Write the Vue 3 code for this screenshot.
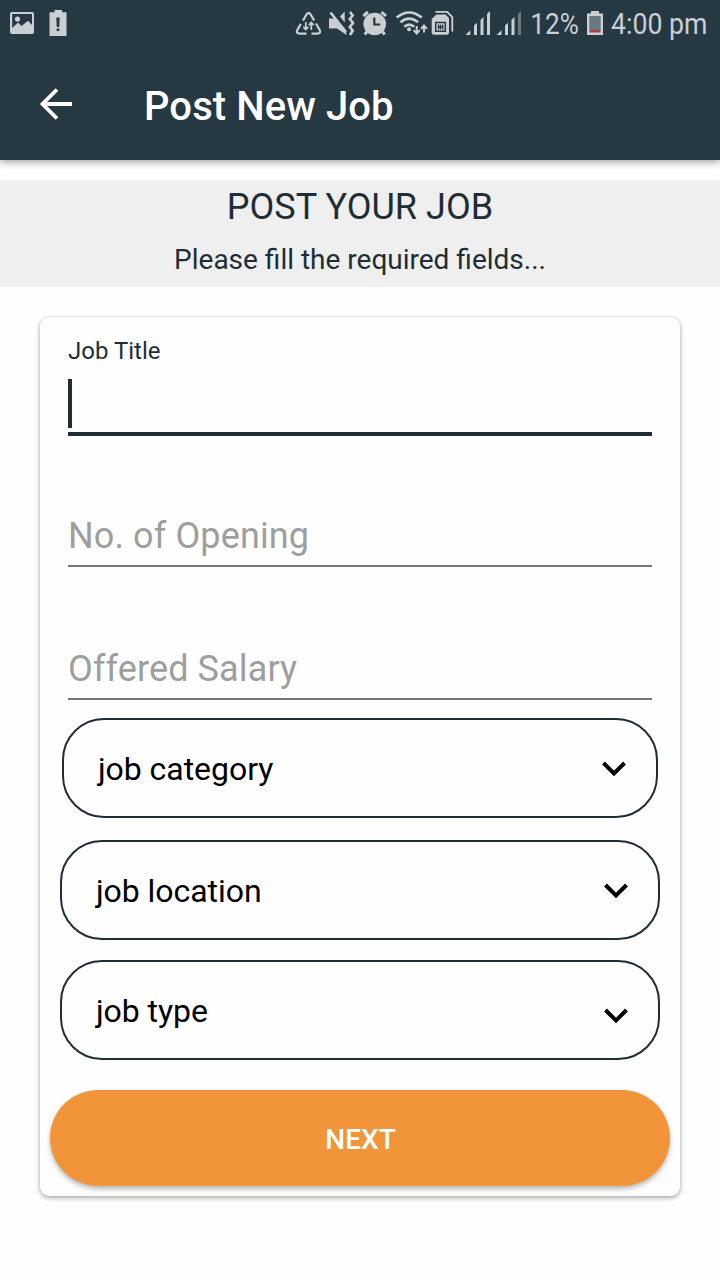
<script setup>
const hints = ['No. of Opening', 'Offered Salary']
const selects = [
  { label: 'job category', cls: 'category' },
  { label: 'job location', cls: 'location' },
  { label: 'job type', cls: 'type' },
]
</script>

<template>
  <div class="screen">
    <header class="top">
      <div class="status">
        <svg class="left-icons" viewBox="0 0 80 48" width="80" height="48">
          <path fill="#c9cfd2" fill-rule="evenodd" d="M12 12H32a2 2 0 0 1 2 2V32a2 2 0 0 1-2 2H12a2 2 0 0 1-2-2V14a2 2 0 0 1 2-2ZM12.2 14V28L18 22.5L21.500 26L28 20.800L32 25V14ZM17.500 16.500a2.600 2.600 0 1 1 0 5.200a2.600 2.600 0 0 1 0-5.200Z" />
          <path fill="#c9cfd2" fill-rule="evenodd" d="M54.500 10H62V12.300H66.500V36H49.500V12.300H54.500ZM56.300 17.500H59.700L59.300 27H56.700ZM56.600 28.600H59.400V31H56.600Z" />
        </svg>
        <svg class="right-icons" viewBox="292 0 428 48" width="428" height="48">
          <g fill="none" stroke="#c9cfd2" stroke-width="2.200">
            <path d="M303 20.500L306.700 14.200Q308.500 11.600 310.400 14.200L314.200 20.500M316 23.500L319.800 30.300Q321 33.500 317.500 33.600H311.500M306.500 33.600H299.500Q296 33.500 297.200 30.300L300.800 24" />
            <path stroke-width="1.700" d="M305.800 22V29.300M303.300 26.800L305.800 29.500L308.300 26.800M311.300 30V22.700M308.800 25.200L311.300 22.500L313.800 25.200" />
            <path stroke-width="2.600" d="M330.500 12.500L346 32" />
            <path stroke-width="2.600" d="M350 12L352.700 15.500L349.800 19L353 23L349.800 27L352.700 30.500L350 35" />
          </g>
          <path fill="#c9cfd2" d="M329 18.500H334.500L346.500 33V35L337 28.500H329ZM340 16.500L344.700 11.500V22.500Z" />
          <circle cx="374.700" cy="24" r="11.300" fill="#c9cfd2" />
          <path fill="none" stroke="#c9cfd2" stroke-width="3" d="M363.400 16L368 12M381.500 12L386 16M367.500 31L364.800 34.500M382 31L384.700 34.500" />
          <path fill="none" stroke="#263842" stroke-width="2.200" d="M374.300 17.500V24.500H380.300" />
          <g fill="none" stroke="#c9cfd2" stroke-width="2.600">
            <path d="M396.700 17.500Q409.200 7.500 421.700 17.500M400.500 22.200Q409.200 15 418 22.200M404.300 26.800Q409.200 22.500 414.200 26.800" />
            <path stroke-width="2" d="M416.700 26V33M413.700 30.200L416.700 33.500L419.700 30.200M424 32.500V26M421 28.800L424 25.500L427 28.800" />
          </g>
          <circle cx="409" cy="29.300" r="2" fill="#c9cfd2" />
          <path fill="#c9cfd2" d="M436.500 14.500H445.500L449 18V32.500Q449 34.800 446.700 34.800H434Q431.700 34.800 431.700 32.500V19Z" />
          <path fill="none" stroke="#c9cfd2" stroke-width="1.800" d="M435.500 11.800H447.200L452.300 17V31.500" />
          <path fill="none" stroke="#263842" stroke-width="1.500" d="M435.700 22.500H445.300V31.300H435.700Z" />
          <path fill="none" stroke="#263842" stroke-width="1.300" d="M438.500 24.500V29.500M440.500 24.500V29.500M442.700 24.500V29.500M438.500 27H442.700" />
          <path fill="#c9cfd2" d="M465.500 35L470.300 30.300V35ZM474 35V25.500L477 22.800V35ZM480.500 35V20L483.500 17V35ZM487 35V14L490 11V35Z" />
          <path fill="#c9cfd2" d="M496.500 35L501.500 30.300V35ZM505 35V25.500L508 22.800V35ZM511.500 35V20L514.500 17V35Z" />
          <path fill="#6b787f" d="M518 35V14L521 11V35Z" />
          <text x="530.300" y="34" textLength="48.500" lengthAdjust="spacingAndGlyphs">12%</text>
          <path fill="#c9cfd2" d="M591 11H599V13.500H603V35H587V13.500H591Z" />
          <path fill="#6b787f" d="M589.300 16H600.700V31H589.300Z" />
          <path fill="#b3383e" d="M589.700 30.300H600.300V32.500H589.700Z" />
          <text x="611" y="34" textLength="96.500" lengthAdjust="spacingAndGlyphs">4:00 pm</text>
        </svg>
      </div>
      <div class="bar">
        <svg class="back" viewBox="0 0 34 34" width="34" height="34">
          <path d="M33 17H4.500M18 2.500L3.500 17L18 31.500" fill="none" stroke="#fff" stroke-width="3.800" />
        </svg>
        <h1>Post New Job</h1>
      </div>
    </header>

    <section class="banner">
      <h2>POST YOUR JOB</h2>
      <p>Please fill the required fields...</p>
    </section>

    <main class="card">
      <div class="field active">
        <label>Job Title</label>
        <div class="entry"><i class="caret"></i></div>
      </div>
      <div v-for="h in hints" :key="h" class="field hint"><span>{{ h }}</span></div>
      <div v-for="s in selects" :key="s.label" class="select" :class="s.cls">
        <span>{{ s.label }}</span>
        <svg viewBox="0 0 24 16" width="24" height="16">
          <path d="M1.500 2L12 12.500L22.500 2" fill="none" stroke="#000" stroke-width="4" />
        </svg>
      </div>
      <button class="next"><span>NEXT</span></button>
    </main>
  </div>
</template>

<style>
body { background: #fff; }
</style>

<style scoped>
* { box-sizing: border-box; margin: 0; }
.screen {
  height: 1280px;
  overflow: hidden;
  background: #fefefe;
  font-family: Roboto, "Liberation Sans", sans-serif;
  color: #1f2d35;
}
.top {
  height: 160px;
  background: #263842;
  box-shadow: 0 2px 8px rgba(0, 0, 0, .38);
}
.status { display: flex; justify-content: space-between; height: 48px; }
.status svg { display: block; }
.status text { font-size: 30px; fill: #c9cfd2; }
.bar { display: flex; align-items: center; height: 112px; padding-left: 39px; }
.back { display: block; }
h1 {
  margin-left: 71px;
  padding-top: 6px;
  font-size: 40px;
  line-height: 48px;
  font-weight: 500;
  letter-spacing: .08px;
  color: #fff;
  white-space: nowrap;
}
.banner {
  height: 107px;
  margin-top: 20px;
  background: #efefef;
  text-align: center;
}
h2 { padding-top: 6px; font-size: 36px; line-height: 43px; font-weight: 400; letter-spacing: .04px; }
.banner p { padding-top: 14px; font-size: 28px; line-height: 34px; }
.card {
  height: 879px;
  margin: 30px 40px 0;
  border-radius: 9px;
  background: #fefefe;
  box-shadow: 0 2px 5px rgba(0, 0, 0, .32), 0 0 2px rgba(0, 0, 0, .12);
}
.field { margin: 0 28px; }
.active { height: 119px; padding-top: 20px; border-bottom: 4px solid #1f2d35; }
.active label { display: block; font-size: 24px; line-height: 28px; }
.entry { padding-top: 14px; }
.caret { display: block; width: 4px; height: 49px; background: #1f2d35; }
.hint {
  display: flex;
  align-items: flex-end;
  height: 131px;
  padding-bottom: 7px;
  border-bottom: 2px solid #757575;
  font-size: 36px;
  line-height: 43px;
  letter-spacing: .12px;
  color: #9e9e9e;
}
.hint + .hint { height: 133px; }
.select {
  display: flex;
  align-items: center;
  justify-content: space-between;
  height: 100px;
  margin: 20px 20px 0;
  padding: 2px 30px 0 34px;
  border: 2px solid #1f2d35;
  border-radius: 42px;
  font-size: 32px;
  line-height: 40px;
  letter-spacing: -.05px;
  color: #000;
}
.select svg { display: block; }
.category { margin: 18px 22px 0; }
.location { margin-top: 22px; }
.type svg { margin-top: 10px; }
.next {
  display: block;
  width: 620px;
  height: 96px;
  margin: 30px 10px 0;
  padding: 3px 0 0 1px;
  border: 0;
  border-radius: 48px;
  background: #f2953a;
  box-shadow: 0 3px 5px rgba(0, 0, 0, .28);
  font: 500 28px/34px Roboto, "Liberation Sans", sans-serif;
  color: #fff;
}
</style>
